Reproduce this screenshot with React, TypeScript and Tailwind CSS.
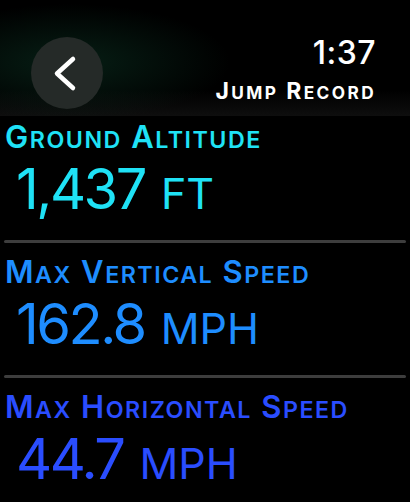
type Stat = {
  label: string;
  value: string;
  unit: string;
  color: string;
};

const stats: Stat[] = [
  { label: "Ground Altitude", value: "1,437", unit: "ft", color: "text-[#1fe2f6]" },
  { label: "Max Vertical Speed", value: "162.8", unit: "mph", color: "text-[#1e8dff]" },
  { label: "Max Horizontal Speed", value: "44.7", unit: "mph", color: "text-[#2a4dff]" },
];

// watchOS style small caps: first letter full size, the rest as smaller capitals
const SmallCaps = ({ text }: { text: string }) => (
  <>
    {text.split(" ").map((word, i) => (
      <span key={i}>
        {i > 0 && " "}
        {word[0]}
        <span className="text-[0.75em]">{word.slice(1).toUpperCase()}</span>
      </span>
    ))}
  </>
);

const StatRow = ({ stat, last }: { stat: Stat; last: boolean }) => {
  return (
    <section className={stat.color}>
      <h2 className="pl-[5px] text-[31px] leading-none font-semibold tracking-[1.5px]">
        <SmallCaps text={stat.label} />
      </h2>
      <p className="mt-[9px] pl-[16px] text-[56px] leading-none font-normal">
        <span className="tracking-[-2.5px]">{stat.value}</span>
        <span className="ml-[16px] text-[43px]">{stat.unit.toUpperCase()}</span>
      </p>
      {!last && <div className="mt-[23px] mb-[13px] mx-[4px] h-[3px] rounded-full bg-[#3d3d3d]" />}
    </section>
  );
};

export default function App() {
  return (
    <div className="w-[410px] h-[502px] overflow-hidden bg-black font-['Inter',sans-serif] text-white">
      <header className="h-[116px] flex justify-between pl-[31px] pr-[34px] pt-[37px] bg-[image:radial-gradient(ellipse_160px_58px_at_70px_62px,rgba(18,85,58,0.36),transparent),linear-gradient(to_bottom,#000_78%,#0e0e0e)]">
        <button className="w-[72px] h-[72px] rounded-full bg-[#252a28] flex items-center justify-center">
          <svg width="72" height="72" viewBox="0 0 72 72" fill="none">
            <polyline
              points="42,22 26,36.5 42,51"
              stroke="white"
              strokeWidth="4.5"
              strokeLinecap="round"
              strokeLinejoin="round"
            />
          </svg>
        </button>
        <div className="flex flex-col items-end">
          <span className="text-[32px] leading-none font-medium tracking-[0.5px]">1:37</span>
          <span className="mt-[11px] text-[23px] leading-none font-bold tracking-[2.4px]">
            <SmallCaps text="Jump Record" />
          </span>
        </div>
      </header>
      <main className="pt-[5px]">
        {stats.map((stat, i) => (
          <StatRow key={stat.label} stat={stat} last={i === stats.length - 1} />
        ))}
      </main>
    </div>
  );
}
